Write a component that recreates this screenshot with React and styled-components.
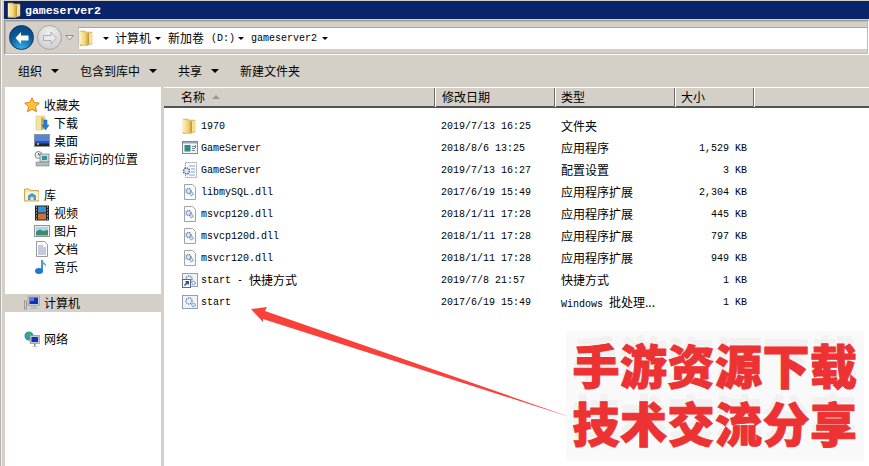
import React from 'react'
import styled, { createGlobalStyle } from 'styled-components'

const GlobalStyle = createGlobalStyle`
  html, body { margin: 0; padding: 0; background: #d4d0c8; }
  * { box-sizing: border-box; }
`

const cjk = `"Noto Sans CJK SC", "Liberation Sans", sans-serif`
const mono = `"Liberation Mono", "Noto Sans CJK SC", monospace`

const Folder = ({ size = 16 }) => (
  <svg width={size} height={size} viewBox="0 0 16 16">
    <defs>
      <linearGradient id="fold" x1="0" x2="1" y1="0" y2="0">
        <stop offset="0" stopColor="#fdf3c0" />
        <stop offset="0.6" stopColor="#f3d778" />
        <stop offset="1" stopColor="#d9b75a" />
      </linearGradient>
    </defs>
    <path d="M1 1h5l1 1h6v12l-5 1.500H1z" fill="#e6c66c" stroke="#c9ad62" strokeWidth="0.5" />
    <path d="M1 1.500l7.500 2V15.500L1 14z" fill="url(#fold)" />
    <path d="M10 3h3v10l-3 1z" fill="#f6e08e" />
    <path d="M8.500 3.500l1.500-.5v11l-1.500 1.500z" fill="#bd9a45" />
  </svg>
)

const Star = () => (
  <svg width="16" height="16" viewBox="0 0 16 16">
    <path d="M8 .800l2.200 4.700 5.100.6-3.800 3.500 1 5.100L8 12.200l-4.500 2.500 1-5.100L.700 6.100l5.100-.6z" fill="#fbc531" stroke="#e0802a" strokeWidth="1" />
  </svg>
)

const Downloads = () => (
  <svg width="16" height="16" viewBox="0 0 16 16">
    <path d="M2 1h9v12l-4 2H2z" fill="#f4e3a2" stroke="#cdb878" strokeWidth="0.5" />
    <path d="M7 2l3 1v11l-3 1z" fill="#c6a95c" />
    <path d="M10 5h3v5h2l-3.500 5L8 10h2z" fill="#1f7fd8" stroke="#14589e" strokeWidth="0.5" />
  </svg>
)

const Desktop = () => (
  <svg width="16" height="16" viewBox="0 0 16 16">
    <rect x="0.500" y="1.500" width="15" height="12" fill="#2a54b6" stroke="#8d949c" />
    <rect x="1" y="2" width="14" height="6" fill="#5784d8" />
    <rect x="1" y="10.500" width="14" height="2.500" fill="#1c2430" />
    <rect x="3" y="10" width="2" height="2" fill="#e0a040" />
  </svg>
)

const Recent = () => (
  <svg width="16" height="16" viewBox="0 0 16 16">
    <circle cx="4.500" cy="4" r="3.500" fill="#e8ecec" stroke="#808890" />
    <path d="M4.500 2v2h2" fill="none" stroke="#40484f" strokeWidth="0.8" />
    <rect x="6" y="3" width="9" height="8" fill="#cdd5d8" stroke="#7c868c" strokeWidth="0.8" />
    <rect x="8" y="5" width="5" height="4" fill="#3c8f9c" />
    <rect x="2" y="11" width="13" height="4" fill="#b4b8b8" stroke="#808488" strokeWidth="0.6" />
  </svg>
)

const Library = () => (
  <svg width="16" height="16" viewBox="0 0 16 16">
    <path d="M.500 2h5l1 1.500h8V14H.500z" fill="#f7e3a0" stroke="#c8a95c" />
    <rect x="1.500" y="5" width="13" height="8" fill="#fdf3cc" />
    <path d="M4 13V8.500L8 6l4 2.500V13z" fill="#4d9bd0" />
    <path d="M6.500 13v-3h3v3z" fill="#d6ecf6" />
  </svg>
)

const Video = () => (
  <svg width="16" height="16" viewBox="0 0 16 16">
    <rect x="1" y="0.500" width="14" height="15" fill="#22262a" />
    <rect x="4" y="1.500" width="8" height="6" fill="#3f8fc8" />
    <rect x="4" y="8.500" width="8" height="6" fill="#d3703a" />
    <path d="M2 2h1M2 5h1M2 8h1M2 11h1M2 14h1M13 2h1M13 5h1M13 8h1M13 11h1M13 14h1" stroke="#dfe4e6" strokeWidth="1.200" />
  </svg>
)

const Picture = () => (
  <svg width="16" height="16" viewBox="0 0 16 16">
    <rect x="0.500" y="2.500" width="15" height="11" fill="#e8eef0" stroke="#8d949c" />
    <rect x="2" y="4" width="12" height="4.500" fill="#a9d4ef" />
    <path d="M2 8.500l4-2 3 1.500 5-1v5.500H2z" fill="#3f8a6e" />
  </svg>
)

const Doc = () => (
  <svg width="16" height="16" viewBox="0 0 16 16">
    <path d="M2.500 .500h8l3 3v12h-11z" fill="#fafafa" stroke="#9a9a9a" />
    <path d="M4 5h5M4 7h8M4 9h8M4 11h8M4 13h8" stroke="#8c9cc8" />
  </svg>
)

const Music = () => (
  <svg width="16" height="16" viewBox="0 0 16 16">
    <path d="M8 1v10" stroke="#1f78c8" strokeWidth="1.600" />
    <path d="M8 1c1 3 5 3 4 7-.5-2-2-3-4-3z" fill="#49a5e6" />
    <ellipse cx="5" cy="12" rx="4" ry="3" fill="#1f78c8" />
  </svg>
)

const Computer = () => (
  <svg width="16" height="16" viewBox="0 0 16 16">
    <rect x="0.500" y="6" width="2" height="8" fill="#d0d0cc" stroke="#848484" strokeWidth="0.700" />
    <rect x="4" y="1" width="11.500" height="9.500" fill="#c6cacc" stroke="#9ca0a4" strokeWidth="0.700" />
    <rect x="5.500" y="2.500" width="8.500" height="6.500" fill="#1230b8" />
    <rect x="6" y="3" width="4" height="3" fill="#5a7de0" />
    <path d="M7 11h5l2 3H6z" fill="#b8bcbc" />
  </svg>
)

const Network = () => (
  <svg width="16" height="16" viewBox="0 0 16 16">
    <circle cx="5" cy="5" r="4.500" fill="#2f8fd8" />
    <path d="M3 2l3-1 2 3-3 2-2-1zM2 6l2 1 1 2-2-.500z" fill="#3cb43c" />
    <rect x="6" y="4.500" width="9.500" height="8" fill="#c4c8cc" stroke="#8c9298" strokeWidth="0.700" />
    <rect x="7.500" y="6" width="6.500" height="5" fill="#1234b8" />
    <path d="M10 12.500h1.500V15H13v.500H8.500V15H10z" fill="#8a9096" />
  </svg>
)

const ExeIcon = () => (
  <svg width="16" height="16" viewBox="0 0 16 16">
    <rect x="0.500" y="1.500" width="15" height="12" fill="#f2f4f6" stroke="#808a94" />
    <rect x="1" y="2" width="14" height="1.500" fill="#9aa8b8" />
    <rect x="2.500" y="5" width="6" height="6.500" fill="#2f8a8a" />
    <path d="M10 6.500h3M10 8.500h3M10 10.500h3" stroke="#7a8694" />
    <rect x="13" y="5" width="1" height="3" fill="#4aa04a" />
  </svg>
)

const IniIcon = () => (
  <svg width="16" height="16" viewBox="0 0 16 16">
    <path d="M3.500 .500h11v15h-11z" fill="#fbfcfd" stroke="#a4a8ae" strokeDasharray="1.500 .5" />
    <path d="M7 4h6M9 7h4M9 10h4M7 13h6" stroke="#8ea0c0" />
    <circle cx="4.500" cy="9" r="3" fill="#dfe6ee" stroke="#4c6ea4" strokeWidth="1.600" strokeDasharray="1.500 .8" />
  </svg>
)

const DllIcon = () => (
  <svg width="16" height="16" viewBox="0 0 16 16">
    <path d="M2.500 .500h8l3 3v12h-11z" fill="#fafbfc" stroke="#a0a4a8" />
    <circle cx="6.500" cy="7" r="2.500" fill="#dbe6f2" stroke="#4f74a8" strokeWidth="1.200" strokeDasharray="1.300 .7" />
    <circle cx="9.500" cy="10" r="1.700" fill="#dbe6f2" stroke="#4f74a8" strokeWidth="1" strokeDasharray="1 .6" />
  </svg>
)

const BatIcon = ({ shortcut }) => (
  <svg width="16" height="16" viewBox="0 0 16 16">
    <rect x="0.500" y="1.500" width="15" height="13" fill="#f0f3f6" stroke="#94a0ac" />
    <circle cx="7" cy="7" r="3" fill="#eef2f6" stroke="#5a7cac" strokeWidth="1.300" strokeDasharray="1.300 .8" />
    <circle cx="11.500" cy="11" r="1.800" fill="#dfe8f2" stroke="#4f74a8" strokeWidth="1" strokeDasharray="1 .6" />
    {shortcut && (
      <>
        <rect x="0.500" y="7.500" width="8" height="8" fill="#fafafa" stroke="#606a74" />
        <path d="M2.500 13.500l3-3M3.500 9.800h2.700v2.700" fill="none" stroke="#1848a8" strokeWidth="1.400" />
      </>
    )}
  </svg>
)

const Tri = styled.span`
  width: 0;
  height: 0;
  margin-left: ${p => p.$left || 0}px;
  border-left: ${p => p.$size || 4}px solid transparent;
  border-right: ${p => p.$size || 4}px solid transparent;
  border-top: ${p => p.$size || 4}px solid #000;
  margin-top: 1px;
`

const Window = styled.div`
  width: 869px;
  height: 466px;
  overflow: hidden;
  position: relative;
  background: #d4d0c8;
  box-shadow: inset 1px 0 0 #b4b1aa, inset 2px 0 0 #f4f4f2;
  display: flex;
  flex-direction: column;
  padding: 1px 0 0 4px;
  font-family: ${cjk};
  font-size: 12px;
  color: #000;
`

const TitleBar = styled.div`
  height: 18px;
  background: #0a246a;
  display: flex;
  align-items: center;
  gap: 2px;
  padding-left: 3px;
  flex-shrink: 0;
`

const TitleText = styled.span`
  font-family: ${mono};
  font-size: 11.500px;
  font-weight: 700;
  color: #fff;
`

const NavFrame = styled.div`
  height: 35px;
  margin-top: 1px;
  border: 1px solid #fff;
  border-top-color: #9a9893;
  border-left-color: #9a9893;
  outline: 1px solid #bdbab3;
  outline-offset: -2px;
  display: flex;
  align-items: center;
  padding: 0 0 0 4px;
  flex-shrink: 0;
`

const RoundButton = styled.div`
  width: 25px;
  height: 25px;
  border-radius: 50%;
  display: flex;
  align-items: center;
  justify-content: center;
  margin-right: 3px;
  border: 1px solid ${p => (p.$off ? '#a8a8a8' : '#0c3a66')};
  background: ${p =>
    p.$off
      ? 'radial-gradient(circle at 50% 30%, #f0f0f0, #c8c8c8)'
      : 'radial-gradient(circle at 50% 100%, #2fb4ef, #0b5a9c 55%, #0a3f75)'};
`

const NavDrop = styled.div`
  width: 13px;
  display: flex;
  justify-content: flex-start;
`

const AddressBar = styled.div`
  flex: 1;
  height: 22px;
  background: #fff;
  border-top: 1px solid #a8a59e;
  border-left: 1px solid #c4c1ba;
  display: flex;
  align-items: center;
`

const Crumb = styled.span`
  margin-left: ${p => p.$left || 0}px;
  font-family: ${p => (p.$mono ? mono : cjk)};
  font-size: ${p => (p.$mono ? '10px' : '12px')};
  padding-bottom: ${p => (p.$mono ? 0 : 2)}px;
  white-space: pre;
`

const Toolbar = styled.div`
  height: 32px;
  display: flex;
  align-items: center;
  padding: 0 0 1px 14px;
  flex-shrink: 0;
`

const ToolButton = styled.div`
  display: flex;
  align-items: center;
  gap: 9px;
  margin-right: 21px;
`

const Body = styled.div`
  flex: 1;
  display: flex;
  min-height: 0;
  padding-left: 1px;
`

const Sidebar = styled.div`
  width: 156px;
  background: #fff;
  padding-top: 9px;
  display: flex;
  flex-direction: column;
  gap: 18px;
  flex-shrink: 0;
`

const NavGroup = styled.div`
  display: flex;
  flex-direction: column;
`

const NavRow = styled.div`
  height: 18px;
  display: flex;
  align-items: center;
  gap: 4px;
  padding-left: ${p => (p.$child ? 29 : 19)}px;
  background: ${p => (p.$selected ? '#d4d0c8' : 'transparent')};
  white-space: nowrap;
`

const NavLabel = styled.span`
  padding-bottom: 2px;
`

const Content = styled.div`
  flex: 1;
  margin-left: 3px;
  background: #fff;
  display: flex;
  flex-direction: column;
  min-width: 0;
`

const HeaderRow = styled.div`
  height: 21px;
  display: grid;
  grid-template-columns: 272px 120px 120px 79px 1fr;
  background: #d4d0c8;
  border-top: 1px solid #fff;
  border-bottom: 2px solid #55534f;
  flex-shrink: 0;
`

const HeaderCell = styled.div`
  display: flex;
  align-items: center;
  gap: 7px;
  padding: 0 0 2px ${p => p.$pad || 6}px;
  border-right: 1px solid #fff;
  box-shadow: inset -1px 0 0 #6f6d69;
`

const SortArrow = styled.span`
  width: 0;
  height: 0;
  border-left: 4px solid transparent;
  border-right: 4px solid transparent;
  border-bottom: 4px solid #9c9a96;
`

const FileList = styled.div`
  padding-top: 7px;
`

const FileRow = styled.div`
  height: 22px;
  display: grid;
  grid-template-columns: 272px 119px 120px 72px;
  align-items: center;
`

const NameCell = styled.div`
  display: flex;
  align-items: center;
  gap: 3px;
  padding-left: 18px;
  white-space: pre;
`

const NameLabel = styled.div`
  display: flex;
  align-items: center;
`

const NameText = styled.span`
  font-family: ${mono};
  font-size: 10px;
`

const WideText = styled.span`
  font-family: ${cjk};
  font-size: 12px;
  padding-bottom: 2px;
`

const DateCell = styled.div`
  font-family: ${mono};
  font-size: 10px;
  padding-left: 5px;
`

const TypeCell = styled.div`
  padding: 0 0 2px 6px;
  white-space: nowrap;
`

const TypeLatin = styled.span`
  font-family: ${mono};
  font-size: 10px;
`

const SizeCell = styled.div`
  font-family: ${mono};
  font-size: 10px;
  text-align: right;
`

const ArrowMark = styled.svg`
  position: absolute;
  left: 0;
  top: 0;
  pointer-events: none;
`

const Stamp = styled.div`
  position: absolute;
  left: 566px;
  top: 331px;
  width: 298px;
  height: 130px;
  background: #f9f9f9;
  display: flex;
  flex-direction: column;
  align-items: center;
  font-family: "Noto Sans CJK SC", sans-serif;
  font-weight: 900;
  font-size: 47px;
  line-height: 58px;
  letter-spacing: 0.500px;
  color: #ec3232;
  -webkit-text-stroke: 1px #ec3232;
  text-shadow: 0 -8px 0 #f1f1f1;
  white-space: nowrap;
  padding-top: 4px;
`

const navGroups = [
  [
    [Star, '收藏夹'],
    [Downloads, '下载', true],
    [Desktop, '桌面', true],
    [Recent, '最近访问的位置', true],
  ],
  [
    [Library, '库'],
    [Video, '视频', true],
    [Picture, '图片', true],
    [Doc, '文档', true],
    [Music, '音乐', true],
  ],
  [[Computer, '计算机', false, true]],
  [[Network, '网络']],
]

const files = [
  [<Folder />, '1970', '', '2019/7/13 16:25', '文件夹', ''],
  [<ExeIcon />, 'GameServer', '', '2018/8/6 13:25', '应用程序', '1,529 KB'],
  [<IniIcon />, 'GameServer', '', '2019/7/13 16:27', '配置设置', '3 KB'],
  [<DllIcon />, 'libmySQL.dll', '', '2017/6/19 15:49', '应用程序扩展', '2,304 KB'],
  [<DllIcon />, 'msvcp120.dll', '', '2018/1/11 17:28', '应用程序扩展', '445 KB'],
  [<DllIcon />, 'msvcp120d.dll', '', '2018/1/11 17:28', '应用程序扩展', '797 KB'],
  [<DllIcon />, 'msvcr120.dll', '', '2018/1/11 17:28', '应用程序扩展', '949 KB'],
  [<BatIcon shortcut />, 'start - ', '快捷方式', '2019/7/8 21:57', '快捷方式', '1 KB'],
  [<BatIcon />, 'start', '', '2017/6/19 15:49', <><TypeLatin>Windows </TypeLatin>批处理...</>, '1 KB'],
]

function App() {
  return (
    <Window>
      <GlobalStyle />
      <TitleBar>
        <Folder />
        <TitleText>gameserver2</TitleText>
      </TitleBar>

      <NavFrame>
        <RoundButton>
          <svg width="16" height="14" viewBox="0 0 16 14">
            <path d="M7 1L1.500 7 7 13V9.500h7.500v-5H7z" fill="#fff" />
          </svg>
        </RoundButton>
        <RoundButton $off>
          <svg width="16" height="14" viewBox="0 0 16 14">
            <path d="M9 1l5.500 6L9 13V9.500H1.500v-5H9z" fill="#e8e8e8" stroke="#b0b0b0" />
          </svg>
        </RoundButton>
        <NavDrop>
          <svg width="9" height="6" viewBox="0 0 9 6">
            <path d="M.500.500h8L4.500 5z" fill="#e8e8e8" stroke="#909090" />
          </svg>
        </NavDrop>
        <AddressBar>
          <Folder />
          <Tri $size={3} $left={8} />
          <Crumb $left={6}>计算机</Crumb>
          <Tri $size={3} $left={4} />
          <Crumb $left={7}>新加卷</Crumb>
          <Crumb $left={7} $mono>(D:)</Crumb>
          <Tri $size={3} $left={3} />
          <Crumb $left={7} $mono>gameserver2</Crumb>
          <Tri $size={3} $left={5} />
        </AddressBar>
      </NavFrame>

      <Toolbar>
        <ToolButton>组织<Tri /></ToolButton>
        <ToolButton>包含到库中<Tri /></ToolButton>
        <ToolButton>共享<Tri /></ToolButton>
        <ToolButton>新建文件夹</ToolButton>
      </Toolbar>

      <Body>
        <Sidebar>
          {navGroups.map((group, i) => (
            <NavGroup key={i}>
              {group.map(([Icon, label, child, selected]) => (
                <NavRow key={label} $child={child} $selected={selected}>
                  <Icon />
                  <NavLabel>{label}</NavLabel>
                </NavRow>
              ))}
            </NavGroup>
          ))}
        </Sidebar>

        <Content>
          <HeaderRow>
            <HeaderCell $pad={17}>名称<SortArrow /></HeaderCell>
            <HeaderCell>修改日期</HeaderCell>
            <HeaderCell $pad={5}>类型</HeaderCell>
            <HeaderCell $pad={5}>大小</HeaderCell>
            <div />
          </HeaderRow>
          <FileList>
            {files.map(([icon, name, wide, date, type, size], i) => (
              <FileRow key={i}>
                <NameCell>
                  {icon}
                  <NameLabel>
                    <NameText>{name}</NameText>
                    {wide && <WideText>{wide}</WideText>}
                  </NameLabel>
                </NameCell>
                <DateCell>{date}</DateCell>
                <TypeCell>{type}</TypeCell>
                <SizeCell>{size}</SizeCell>
              </FileRow>
            ))}
          </FileList>
        </Content>
      </Body>

      <ArrowMark width="869" height="466" viewBox="0 0 869 466">
        <path d="M251 309L267 307 265 311 573 418 263 319 263 322z" fill="#f9413c" />
      </ArrowMark>

      <Stamp>
        <div>手游资源下载</div>
        <div>技术交流分享</div>
      </Stamp>
    </Window>
  )
}

export default App
